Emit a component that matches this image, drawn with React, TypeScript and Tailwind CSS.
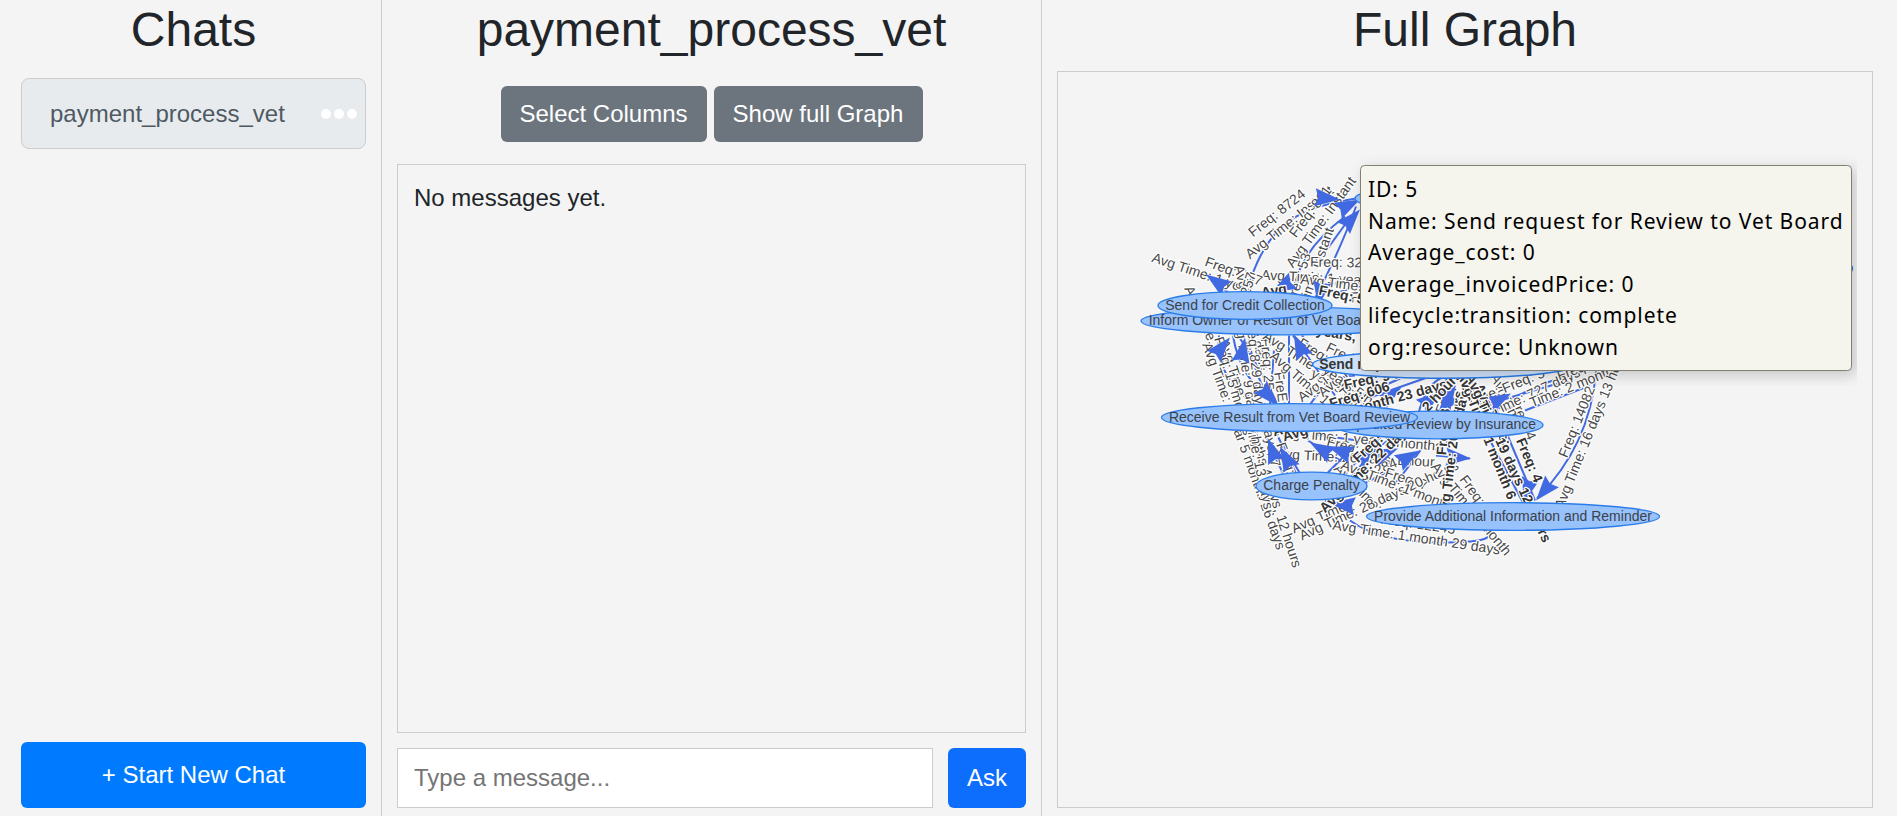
type Label = [text: string, x: number, y: number, angle: number, bold?: boolean, end?: boolean];
type Arrow = [x: number, y: number, angle: number];
type Node = { label: string; cx: number; cy: number; rx: number; selected?: boolean };

const edges: string[] = [
  "M1247 291 Q1258 250 1280 228 T1356 198",
  "M1293 291 Q1300 250 1345 216",
  "M1316 264 L1348 220",
  "M1314 300 Q1340 250 1356 206",
  "M1207 274 L1228 292",
  "M1273 292 L1290 278",
  "M1318 330 L1322 290",
  "M1320 285 Q1345 280 1362 284",
  "M1334 294 Q1350 287 1364 285",
  "M1219 335 Q1215 385 1265 404",
  "M1233 335 Q1240 380 1277 403",
  "M1238 335 Q1262 370 1277 403",
  "M1249 335 Q1252 370 1268 395",
  "M1274 350 L1270 404",
  "M1289 335 L1289 404",
  "M1293 335 L1335 395",
  "M1302 335 L1328 372",
  "M1263 430 L1283 473",
  "M1275 430 L1296 473",
  "M1282 442 L1300 473",
  "M1327 473 Q1350 450 1362 436",
  "M1350 478 Q1372 450 1392 437",
  "M1345 474 L1375 440",
  "M1392 487 Q1410 465 1421 449",
  "M1308 440 L1350 466",
  "M1314 434 L1372 442",
  "M1310 404 Q1330 375 1355 375",
  "M1340 405 L1400 378",
  "M1350 404 L1430 376",
  "M1418 415 Q1425 385 1442 377",
  "M1446 376 L1450 412",
  "M1471 376 L1484 412",
  "M1460 376 Q1476 388 1490 415",
  "M1325 500 L1350 512",
  "M1330 500 L1390 470",
  "M1350 520 Q1380 542 1440 542 T1486 531",
  "M1446 438 L1452 464",
  "M1436 455 L1470 458",
  "M1489 438 L1523 502",
  "M1508 436 L1535 500",
  "M1500 400 L1568 380",
  "M1490 415 Q1525 385 1575 374",
  "M1525 410 L1590 385",
  "M1596 371 Q1590 445 1537 498",
];

const arrows: Arrow[] = [
  [1360, 199, -27], [1360, 209, -48], [1340, 199, 5], [1206, 274, -145],
  [1271, 292, 152], [1318, 306, 100], [1277, 405, 48], [1230, 337, -50],
  [1245, 337, -80], [1294, 334, -115], [1268, 438, -110], [1280, 446, -118],
  [1310, 442, -150], [1328, 446, -160], [1376, 445, -42], [1420, 450, -30],
  [1398, 448, -22], [1471, 458, 4], [1441, 391, -38], [1402, 386, -35],
  [1511, 393, -28], [1464, 401, 0], [1524, 502, 105], [1536, 500, 130],
  [1330, 503, 186], [1450, 411, 83],
];

const labels: Label[] = [
  ["Freq: 8724", 1253, 237, -38],
  ["Avg Time: Instant", 1250, 259, -38.5],
  ["Freq: 861", 1296, 238, -53],
  ["Avg Time: Instant", 1293, 268, -54],
  ["Freq: 53", 1295, 304, -72],
  ["Avg Time: Instant", 1299, 331, -71],
  ["Freq: 3225", 1310, 266, 1],
  ["Avg Time: 1 year 3 months", 1261, 279, 3],
  ["Avg Time: 1 year 5", 1300, 283, 7],
  ["Avg Time: 1 year", 1151, 261, 18.5],
  ["Freq: 257", 1204, 265, 20],
  ["Avg Time:", 1184, 288, 66],
  ["Avg Time: 9 days", 1234, 266, 76],
  ["257", 1249, 296, -72],
  ["Avg", 1262, 297, -10, true],
  ["Freq: 5", 1318, 294, 12, true],
  ["Freq: 5", 1351, 302, -6],
  ["2 years, 4", 1304, 332, 10, true],
  ["Avg Time: 1 year 5 months 26 days", 1277, 550, 70, false, true],
  ["Avg Time: 13 months 4 days, 12 hours", 1293, 568, 72, false, true],
  ["Freq: 15 months", 1214, 338, 73],
  ["Time: 13 days", 1246, 424, 78],
  ["Avg Time: 9 days 4 h", 1234, 315, 82],
  ["Freq: 829 days 1", 1246, 318, 84],
  ["Freq: 25", 1261, 338, 86],
  ["FreEreq", 1274, 372, 82],
  ["days, 7", 1262, 423, 78],
  ["Freq: 7", 1276, 444, 70],
  ["Avg Time: 2 years 5 months", 1262, 338, 33],
  ["Avg Time: 1", 1269, 357, 41],
  ["Freq: 22", 1297, 345, 32],
  ["Freq: 1", 1325, 350, 27],
  ["years 5 min", 1310, 376, 30],
  ["Avg Time: 1", 1302, 402, -36],
  ["Avg Time: 5", 1323, 397, -40],
  ["Freq: 91", 1338, 390, 48],
  ["years 5 hours", 1322, 372, 35],
  ["Freq: 606", 1331, 408, -17, true],
  ["Freq: 9 months", 1345, 389, -12, true],
  ["Avg Time: 1 month 23 days", 1274, 436, -15.5, true],
  ["Avg Time: 1 year 2 months", 1276, 436, 5],
  ["Freq: 28", 1326, 445, 15],
  ["Avg Time: 26 days 1 hour", 1276, 458, 3],
  ["Avg Time: 4", 1333, 469, 45],
  ["Freq: 284", 1343, 489, -23],
  ["Freq: 7", 1384, 476, 18],
  ["Avg", 1284, 441, -16, true],
  ["Freq: 7", 1358, 463, -42, true],
  ["Avg Time: 22 days", 1325, 513, -44, true],
  ["Avg Time:", 1294, 533, -24],
  ["Avg Time: 28 days 20 hours", 1302, 540, -24.5],
  ["Avg Time: 1 month 5", 1340, 468, 21],
  ["Avg Time: 1 month 29 days", 1332, 529, 8.5],
  ["Freq: 12245", 1380, 523, 8],
  ["Freq: 52", 1459, 479, 54],
  ["Avg Time: 1 month", 1505, 556, 50, false, true],
  ["Avg Time: 20 hours", 1448, 519, -83, true],
  ["Freq: 8", 1446, 455, -85, true],
  ["2 hours", 1428, 412, -47, true],
  ["days 5", 1463, 416, -76, true],
  ["Freq:", 1444, 414, -70],
  ["Avg Time: 1 month 6", 1508, 500, 68, true, true],
  ["Avg Time:", 1474, 386, 64, true],
  ["Avg Time: 19 days 12 hours", 1543, 543, 65, true, true],
  ["Freq: 4", 1516, 440, 67, true],
  ["Freq: 4", 1510, 400, 66],
  ["Avg Time:", 1490, 376, 64],
  ["Time: Freq: 5", 1469, 407, -22],
  ["Avg Time: 727 days", 1470, 427, -25],
  ["Freq: 1", 1559, 380, -20],
  ["Time: 2 months", 1532, 407, -22],
  ["Freq: 14082", 1567, 458, -68],
  ["Avg Time: 16 days 13 hours", 1563, 509, -68],
];

const nodes: Node[] = [
  { label: "Validate Incoming Invoice", cx: 1455, cy: 198, rx: 100 },
  { label: "Close Case", cx: 1803, cy: 268, rx: 49.5 },
  { label: "Inform Owner of Result of Vet Board Review", cx: 1286, cy: 320.5, rx: 145 },
  { label: "Send for Credit Collection", cx: 1245, cy: 305, rx: 87 },
  { label: "Send request for Review to Vet Board", cx: 1444, cy: 364, rx: 131.5, selected: true },
  { label: "Expedited Review by Insurance", cx: 1438, cy: 424.5, rx: 105 },
  { label: "Receive Result from Vet Board Review", cx: 1289.5, cy: 417, rx: 128 },
  { label: "Charge Penalty", cx: 1311.5, cy: 485.5, rx: 55.5 },
  { label: "Provide Additional Information and Reminder", cx: 1513, cy: 516, rx: 146.5 },
];

function EdgeLabels({ items, className }: { items: Label[]; className: string }) {
  return (
    <g stroke="#fff" strokeWidth="2.4" strokeLinejoin="round" className={className}>
      {items.map(([text, x, y, a, , end], i) => (
        <text
          key={i}
          transform={`translate(${x} ${y}) rotate(${a})`}
          textAnchor={end ? "end" : "start"}
          className="[paint-order:stroke]"
        >
          {text}
        </text>
      ))}
    </g>
  );
}

function Graph() {
  return (
    <svg className="block h-full w-full font-['Liberation_Sans',sans-serif] text-[14px]" viewBox="1058 72 814 734">
      <g fill="none" stroke="#4169e1" strokeWidth="2">
        {edges.map((d) => <path key={d} d={d} />)}
      </g>
      <EdgeLabels items={labels.filter((l) => !l[4])} className="fill-[#484848]" />
      <g fill="#4169e1">
        {arrows.map(([x, y, a], i) => (
          <path key={i} d="M0 0L-25 9L-22 0L-25 -9Z" transform={`translate(${x} ${y}) rotate(${a})`} />
        ))}
      </g>
      <EdgeLabels items={labels.filter((l) => l[4])} className="fill-[#343434] font-bold" />
      {nodes.map((n) => (
        <g key={n.label}>
          <ellipse
            cx={n.cx}
            cy={n.cy}
            rx={n.rx}
            ry="13.8"
            fill={n.selected ? "#d2e5ff" : "#97c2fc"}
            stroke="#2b7ce9"
            strokeWidth={n.selected ? 1.6 : 1.3}
          />
          <text
            x={n.cx}
            y={n.cy + 4}
            textAnchor="middle"
            className={n.selected ? "fill-[#343434] font-bold" : "fill-[#3c4148]"}
          >
            {n.label}
          </text>
        </g>
      ))}
    </svg>
  );
}

function Tooltip() {
  return (
    <div className="absolute top-[93px] left-[302px] w-[492px] rounded-[4.5px] border border-[#808074] bg-[#f5f4ed] px-[7px] pt-2 pb-[7px] font-['Noto_Sans',sans-serif] text-[21px] leading-[31.5px] tracking-[0.94px] whitespace-nowrap text-black shadow-[4px_4px_15px_rgba(0,0,0,0.2)] [clip-path:inset(-20px_-5px_-15px_-20px)]">
      <div>ID: 5</div>
      <div>Name: Send request for Review to Vet Board</div>
      <div>Average_cost: 0</div>
      <div>Average_invoicedPrice: 0</div>
      <div>lifecycle:transition: complete</div>
      <div>org:resource: Unknown</div>
    </div>
  );
}

export default function App() {
  return (
    <div className="flex h-[816px] w-full overflow-hidden bg-[#f4f4f4] font-['Liberation_Sans',sans-serif] text-2xl leading-9 text-[#212529]">
      <aside className="flex w-[382px] shrink-0 flex-col border-r border-[#ccc] pr-[15px] pb-2 pl-[21px]">
        <h1 className="pt-px text-center text-[48px] leading-[58px]">Chats</h1>
        <div className="mt-[19px] flex h-[71px] items-center justify-between rounded-lg border border-[#ccc] bg-[#e7ebee] pr-2 pl-7 text-[#4f5963]">
          <span>payment_process_vet</span>
          <span className="flex gap-[3px]">
            <i className="size-2.5 rounded-full bg-white" />
            <i className="size-2.5 rounded-full bg-white" />
            <i className="size-2.5 rounded-full bg-white" />
          </span>
        </div>
        <button className="mt-auto h-[66px] rounded-md bg-[#007bff] text-white">+ Start New Chat</button>
      </aside>

      <main className="flex w-[660px] shrink-0 flex-col border-r border-[#ccc] px-[15px] pb-2">
        <h1 className="pt-px text-center text-[48px] leading-[58px]">payment_process_vet</h1>
        <div className="mt-[27px] flex justify-center gap-[7px]">
          <button className="h-14 w-[206px] rounded-md bg-[#6c757d] text-white">Select Columns</button>
          <button className="h-14 w-[209px] rounded-md bg-[#6c757d] text-white">Show full Graph</button>
        </div>
        <div className="mt-[22px] flex-1 border border-[#ccc] px-4 py-[15px]">No messages yet.</div>
        <div className="mt-[15px] flex h-[60px] gap-[15px]">
          <input
            className="min-w-0 flex-1 border border-[#ccc] bg-white px-4 outline-none placeholder:text-[#757575]"
            placeholder="Type a message..."
          />
          <button className="w-[78px] rounded-md bg-[#0d6efd] text-white">Ask</button>
        </div>
      </main>

      <section className="flex min-w-0 flex-1 flex-col pr-6 pb-2 pl-[15px]">
        <h1 className="pt-px text-center text-[48px] leading-[58px]">Full Graph</h1>
        <div className="relative mt-3 min-h-0 flex-1 border border-[#ccc]">
          <Graph />
          <Tooltip />
        </div>
      </section>
    </div>
  );
}
